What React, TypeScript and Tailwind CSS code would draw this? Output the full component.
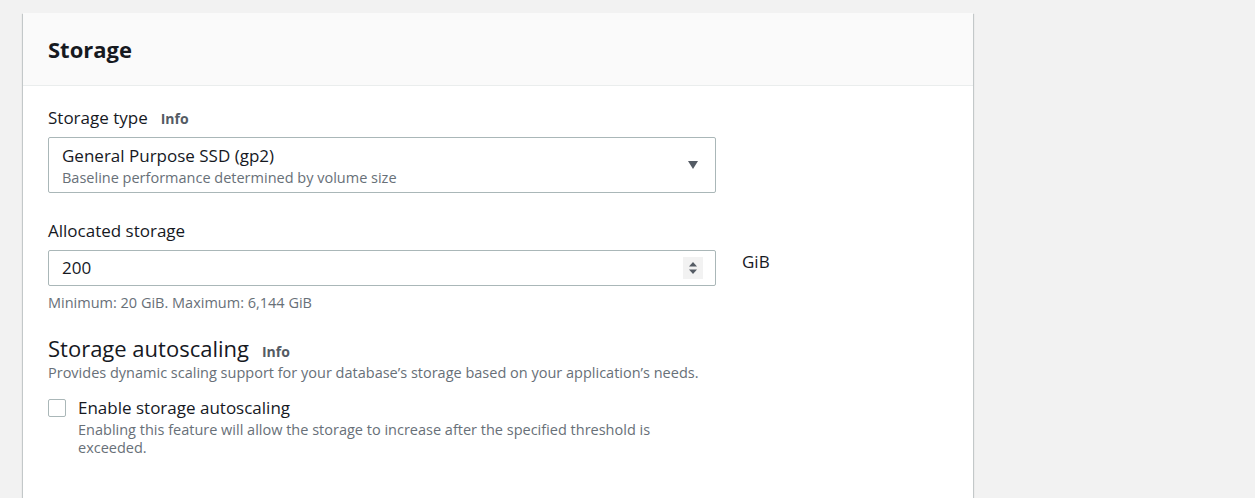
import { useState } from 'react';

const font = { fontFamily: '"Open Sans", "Noto Sans", sans-serif' };

function InfoLink() {
  return <span className="ml-[13px] text-[14px] font-bold text-[#545b64]">Info</span>;
}

export default function App() {
  const [checked, setChecked] = useState(false);

  return (
    <div className="h-[498px] overflow-hidden bg-[#f2f2f2] pl-[23px] pt-[13px]" style={font}>
      <div className="min-h-[520px] w-[950px] bg-white shadow-[0_1px_1px_0_rgba(0,28,36,0.3),1px_1px_1px_0_rgba(0,28,36,0.15),-1px_1px_1px_0_rgba(0,28,36,0.15)]">
        <div className="flex h-[73px] items-center border-b border-[#eaeded] bg-[#fafafa] px-[25px]">
          <h2 className="text-[22px] font-bold leading-none text-[#16191f]">Storage</h2>
        </div>

        <div className="px-[25px] pb-[40px] pt-[21px] text-[#16191f]">
          {/* storage type */}
          <div className="flex items-baseline">
            <span className="text-[17px] leading-[22px]">Storage type</span>
            <InfoLink />
          </div>
          <div className="mt-[8px] flex h-[56px] w-[668px] items-center rounded-[2px] border border-[#aab7b8] pl-[13px] pr-[16px]">
            <div className="flex-1 pt-[4px]">
              <div className="text-[17px] leading-[22px]">General Purpose SSD (gp2)</div>
              <div className="text-[14.5px] leading-[22px] text-[#687078]">Baseline performance determined by volume size</div>
            </div>
            <svg width="12" height="10" viewBox="0 0 12 10">
              <path d="M1 1h10L6 9z" fill="#545b64" />
            </svg>
          </div>

          {/* allocated storage */}
          <div className="mt-[27px] text-[17px] leading-[22px]">Allocated storage</div>
          <div className="mt-[8px] flex items-start">
            <div className="flex h-[36px] w-[668px] items-center rounded-[2px] border border-[#aab7b8] pl-[13px] pr-[12px]">
              <span className="flex-1 text-[17px]">200</span>
              <div className="flex h-[22px] w-[20px] flex-col items-center justify-center gap-[2px] bg-[#f2f2f2]">
                <svg width="10" height="6" viewBox="0 0 10 6"><path d="M1 5.5L5 1l4 4.5z" fill="#545b64" /></svg>
                <svg width="10" height="6" viewBox="0 0 10 6"><path d="M1 .5h8L5 5z" fill="#545b64" /></svg>
              </div>
            </div>
            <span className="ml-[26px] mt-[1px] text-[17px] leading-[22px]">GiB</span>
          </div>
          <div className="mt-[8px] text-[14.5px] leading-[18px] text-[#687078]">Minimum: 20 GiB. Maximum: 6,144 GiB</div>

          {/* autoscaling */}
          <div className="mt-[22px] flex items-baseline">
            <span className="text-[22px] leading-[28px]">Storage autoscaling</span>
            <InfoLink />
          </div>
          <div className="mt-[2px] text-[14.5px] leading-[18px] text-[#687078]">
            Provides dynamic scaling support for your database’s storage based on your application’s needs.
          </div>

          <label className="mt-[15px] flex w-[668px] cursor-pointer items-start">
            <input
              type="checkbox"
              checked={checked}
              onChange={() => setChecked(!checked)}
              className="mt-[2px] h-[18px] w-[18px] shrink-0 appearance-none rounded-[2px] border border-[#aab7b8] bg-white"
            />
            <div className="ml-[12px]">
              <div className="text-[17px] leading-[22px]">Enable storage autoscaling</div>
              <div className="mt-[2px] text-[14.5px] leading-[18px] text-[#687078]">
                Enabling this feature will allow the storage to increase after the specified threshold is exceeded.
              </div>
            </div>
          </label>
        </div>
      </div>
    </div>
  );
}
